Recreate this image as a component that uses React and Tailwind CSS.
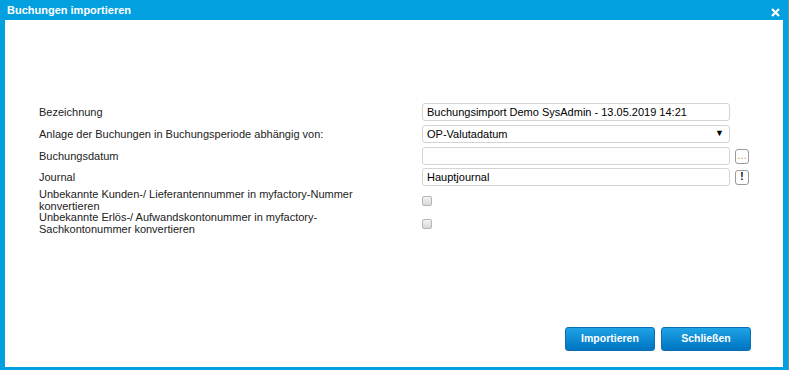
import React from "react";

function Row({ label, children, extra }) {
  return (
    <div className="flex items-center h-[18px]">
      <div className="w-[383px] shrink-0 text-[11px] text-[#222]">{label}</div>
      <div className="w-[308px] h-[18px] shrink-0">{children}</div>
      <div className="ml-[5px]">{extra}</div>
    </div>
  );
}

function Box({ children }) {
  return (
    <div className="w-full h-full border border-[#d4d4d4] rounded-[3px] bg-white flex items-center px-[4px] text-[11px] text-black">
      {children}
    </div>
  );
}

function SmallBtn({ children, bold }) {
  return (
    <div
      className={`w-[14px] h-[15px] border border-[#9a9a9a] rounded-[3px] bg-white flex items-center justify-center text-[10px] leading-none ${
        bold ? "font-bold text-black" : "text-[#c08a2a]"
      }`}
    >
      {children}
    </div>
  );
}

function Check() {
  return (
    <div className="w-[10px] h-[10px] rounded-[2px] border border-[#b5b5b5] bg-gradient-to-b from-[#f2f2f2] to-[#d8d8d8]" />
  );
}

export default function App() {
  return (
    <div className="w-[789px] h-[372px] bg-white font-['Liberation_Sans',Arial,sans-serif]">
      <div className="w-[789px] h-[370px] bg-[#03a0e0] flex flex-col border-r border-[#7a8a95]">
        <div className="h-[20px] flex items-start justify-between pl-[7px] pr-[8px]">
          <span className="text-white font-bold text-[11px] leading-[20px]">
            Buchungen importieren
          </span>
          <svg width="9" height="9" viewBox="0 0 9 9" className="mt-[8px]">
            <path d="M1 1 L8 8 M8 1 L1 8" stroke="white" strokeWidth="2.2" />
          </svg>
        </div>
        <div className="flex-1 bg-white ml-[5px] mr-[5px] mb-[3px] flex flex-col pl-[34px]">
          <div className="mt-[83px] flex flex-col">
            <Row label="Bezeichnung">
              <Box>Buchungsimport Demo SysAdmin - 13.05.2019 14:21</Box>
            </Row>
            <div className="mt-[4px]">
              <Row label="Anlage der Buchungen in Buchungsperiode abhängig von:">
                <Box>
                  <span className="flex-1">OP-Valutadatum</span>
                  <span className="text-[9px] mr-[1px]">▼</span>
                </Box>
              </Row>
            </div>
            <div className="mt-[4px]">
              <Row label="Buchungsdatum" extra={<SmallBtn>…</SmallBtn>}>
                <Box />
              </Row>
            </div>
            <div className="mt-[3px]">
              <Row label="Journal" extra={<SmallBtn bold>!</SmallBtn>}>
                <Box>Hauptjournal</Box>
              </Row>
            </div>
            <div className="mt-[3px] flex items-center">
              <div className="w-[383px] shrink-0 pr-[63px] text-[11px] leading-[11.5px] text-[#222]">
                Unbekannte Kunden-/ Lieferantennummer in myfactory-Nummer konvertieren
              </div>
              <Check />
            </div>
            <div className="flex items-center">
              <div className="w-[383px] shrink-0 pr-[63px] text-[11px] leading-[11.5px] text-[#222]">
                Unbekannte Erlös-/ Aufwandskontonummer in myfactory-Sachkontonummer konvertieren
              </div>
              <Check />
            </div>
          </div>
          <div className="flex-1" />
          <div className="flex justify-end gap-[6px] pr-[32px] pb-[16px]">
            <button className="w-[90px] h-[24px] rounded-[3px] bg-gradient-to-b from-[#1ea3e6] to-[#0074c2] border border-[#0a6fb3] text-white font-bold text-[10.5px]">
              Importieren
            </button>
            <button className="w-[90px] h-[24px] rounded-[3px] bg-gradient-to-b from-[#1ea3e6] to-[#0074c2] border border-[#0a6fb3] text-white font-bold text-[10.5px]">
              Schließen
            </button>
          </div>
        </div>
      </div>
    </div>
  );
}
